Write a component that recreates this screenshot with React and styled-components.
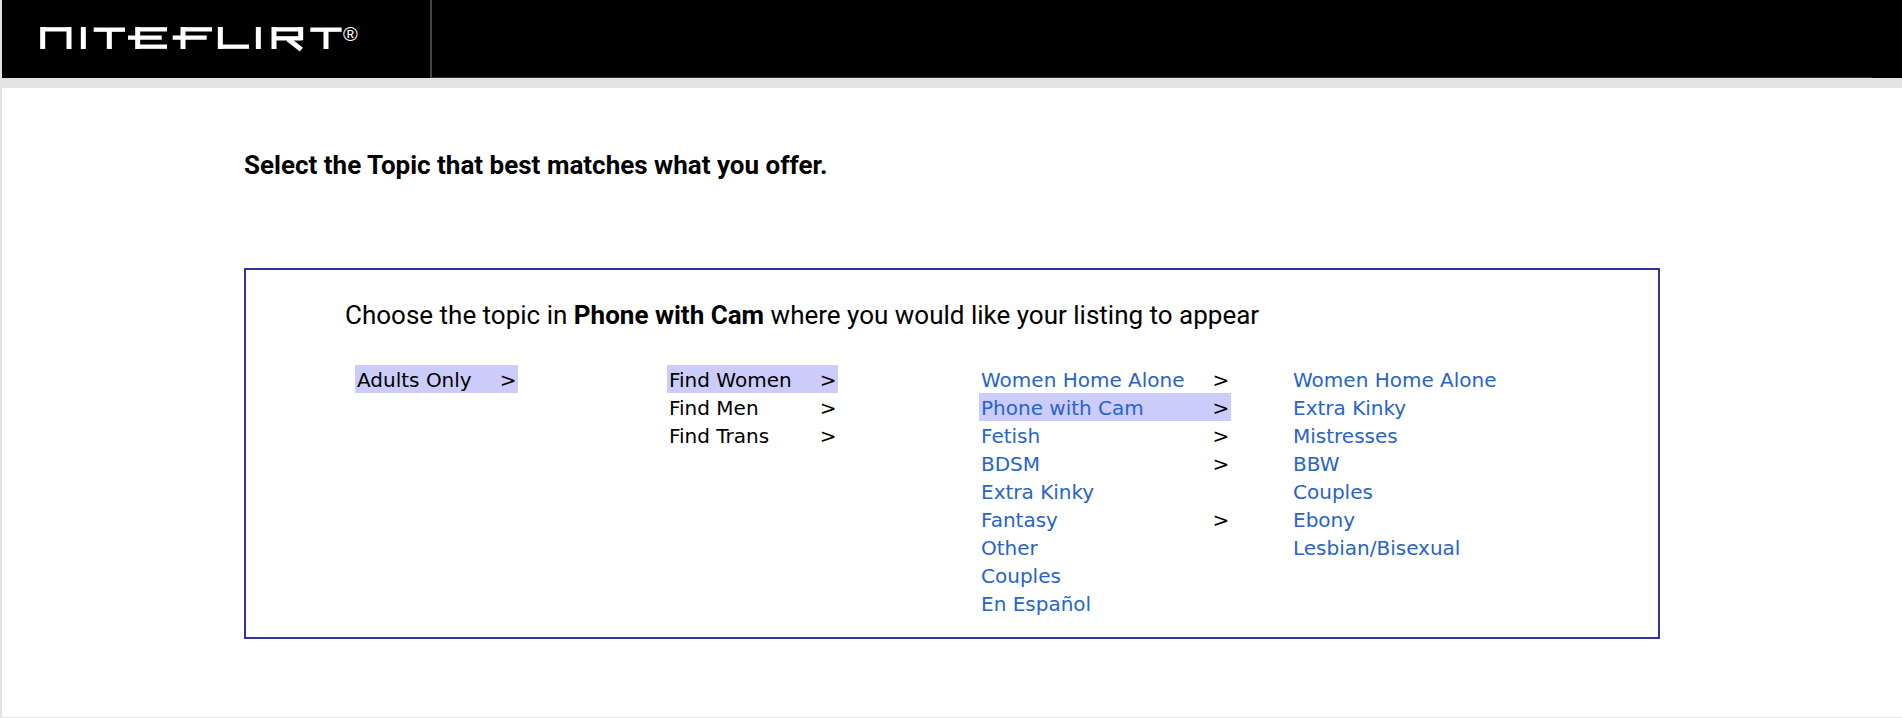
import styled, { createGlobalStyle } from "styled-components"

const adults = [
    { name: 'Adults Only', more: true, active: true },
];

const genders = [
    { name: 'Find Women', more: true, active: true },
    { name: 'Find Men', more: true },
    { name: 'Find Trans', more: true },
];

const topics = [
    { name: 'Women Home Alone', more: true },
    { name: 'Phone with Cam', more: true, active: true },
    { name: 'Fetish', more: true },
    { name: 'BDSM', more: true },
    { name: 'Extra Kinky' },
    { name: 'Fantasy', more: true },
    { name: 'Other' },
    { name: 'Couples' },
    { name: 'En Español' },
];

const subTopics = [
    { name: 'Women Home Alone' },
    { name: 'Extra Kinky' },
    { name: 'Mistresses' },
    { name: 'BBW' },
    { name: 'Couples' },
    { name: 'Ebony' },
    { name: 'Lesbian/Bisexual' },
];

function TopicList({ label, items, color }) {
    return (
        <List aria-label={label}>
            {items.map((item) => (
                <Item key={item.name} $active={item.active}>
                    <TopicLink href="#" $color={color}>{item.name}</TopicLink>
                    {item.more && <Arrow>&gt;</Arrow>}
                </Item>
            ))}
        </List>
    );
}

function Logo() {
    return (
        <LogoMark viewBox="0 0 906 75" role="img" aria-label="NiteFlirt">
            <g stroke="#fff" strokeWidth="15">
                <line x1="8" y1="0" x2="8" y2="66" />
                <line x1="87" y1="0" x2="87" y2="66" />
                <line x1="130" y1="0" x2="130" y2="66" />
                <line x1="208" y1="6" x2="208" y2="66" />
                <line x1="293" y1="0" x2="293" y2="66" />
                <line x1="429" y1="0" x2="429" y2="66" />
                <line x1="541" y1="0" x2="541" y2="66" />
                <line x1="655" y1="0" x2="655" y2="66" />
                <line x1="702" y1="0" x2="702" y2="66" />
                <line x1="782" y1="0" x2="782" y2="40" />
                <line x1="744" y1="36" x2="784" y2="68" />
                <line x1="858" y1="6" x2="858" y2="66" />
            </g>
            <g stroke="#fff" strokeWidth="13">
                <line x1="8" y1="7" x2="87" y2="7" />
                <line x1="161" y1="8" x2="255" y2="8" />
                <line x1="293" y1="7" x2="381" y2="7" />
                <line x1="264" y1="32" x2="365" y2="32" />
                <line x1="293" y1="59" x2="381" y2="59" />
                <line x1="429" y1="7" x2="516" y2="7" />
                <line x1="398" y1="32" x2="500" y2="32" />
                <line x1="541" y1="59" x2="627" y2="59" />
                <line x1="702" y1="7" x2="782" y2="7" />
                <line x1="702" y1="34" x2="782" y2="34" />
                <line x1="811" y1="8" x2="905" y2="8" />
            </g>
        </LogoMark>
    );
}

export default function App() {
    return (
        <Page>
            <GlobalStyle />
            <Header>
                <Brand href="#">
                    <Logo />
                    <Registered>®</Registered>
                </Brand>
                <HeaderBar />
            </Header>
            <Main>
                <Title>Select the Topic that best matches what you offer.</Title>
                <Panel>
                    <Description>
                        Choose the topic in <b>Phone with Cam</b> where you would like your listing to appear
                    </Description>
                    <Columns>
                        <TopicList label="Audience" items={adults} color="#000" />
                        <TopicList label="Category" items={genders} color="#000" />
                        <TopicList label="Topic" items={topics} color="#2864c8" />
                        <TopicList label="Subtopic" items={subTopics} color="#2864c8" />
                    </Columns>
                </Panel>
            </Main>
        </Page>
    );
}

const GlobalStyle = createGlobalStyle`
    * {
        box-sizing: border-box;
    }

    body {
        margin: 0;
        background: #fff;
        color: #000;
        font-family: Roboto, sans-serif;
    }
`

const Page = styled.div`
    min-height: 100vh;
    display: flex;
    flex-direction: column;
    border-left: 2px solid #e3e3e3;
    border-bottom: 1px solid #e3e3e3;
`

const Header = styled.header`
    display: flex;
    height: 88px;
    background: #000;
    border-bottom: 10px solid #e3e3e3;
`

const Brand = styled.a`
    display: flex;
    align-items: flex-start;
    width: 430px;
    padding: 27px 0 0 38px;
    border-right: 2px solid #444;
    color: #fff;
    text-decoration: none;
`

const LogoMark = styled.svg`
    display: block;
    width: 302px;
    height: 25px;
`

const Registered = styled.span`
    margin-left: 1px;
    font-family: "Liberation Sans", Arial, sans-serif;
    font-size: 20px;
    line-height: 14px;
`

const HeaderBar = styled.div`
    flex: 1;
    margin-right: 30px;
    border-bottom: 1px solid #333;
`

const Main = styled.main`
    width: 100%;
    max-width: 1416px;
    margin: 0 auto;
    padding: 59px 0 78px;
`

const Title = styled.h1`
    margin: 0 0 85px;
    font-size: 26px;
    line-height: 36px;
    font-weight: 700;
`

const Panel = styled.section`
    padding: 27px 55px 20px 99px;
    border: 2px solid #333399;
`

const Description = styled.p`
    margin: 0;
    font-size: 26px;
    line-height: 36px;
`

const Columns = styled.div`
    display: grid;
    grid-template-columns: repeat(4, 1fr);
    align-items: start;
    justify-items: start;
    margin-top: 32px;
    padding-left: 10px;
`

const List = styled.ul`
    margin: 0;
    padding: 0;
    list-style: none;
    font-family: Verdana, "DejaVu Sans", sans-serif;
    font-size: 20px;
    line-height: 26px;
`

const Item = styled.li`
    display: flex;
    justify-content: space-between;
    gap: 28px;
    padding: 2px 2px 0;
    background: ${({ $active }) => ($active ? '#ccccfa' : 'transparent')};
`

const TopicLink = styled.a`
    color: ${({ $color }) => $color};
    text-decoration: none;
`

const Arrow = styled.span`
    color: #000;
`
